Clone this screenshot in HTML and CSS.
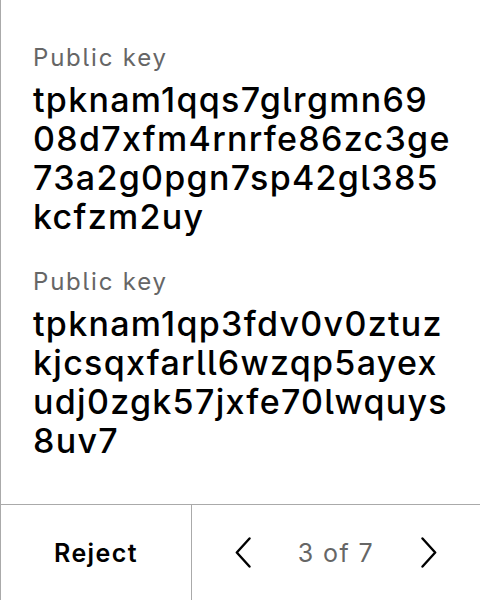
FILE: index.html
```html
<!DOCTYPE html>
<html lang="en">
<head>
<meta charset="utf-8">
<link rel="stylesheet" href="styles.css">
</head>
<body>
<div class="screen">
  <main class="content">
    <section class="field">
      <div class="label">Public key</div>
      <div class="value">tpknam1qqs7glrgmn69<br>08d7xfm4rnrfe86zc3ge<br>73a2g0pgn7sp42gl385<br>kcfzm2uy</div>
    </section>
    <section class="field">
      <div class="label">Public key</div>
      <div class="value">tpknam1qp3fdv0v0ztuz<br>kjcsqxfarll6wzqp5ayex<br>udj0zgk57jxfe70lwquys<br>8uv7</div>
    </section>
  </main>
  <footer class="footer">
    <button class="reject">Reject</button>
    <div class="pager">
      <svg class="chev" width="16" height="31" viewBox="0 0 16 31"><path d="M14.5 1.5 L1.8 15.5 L14.5 29.5" fill="none" stroke="#000" stroke-width="2.4" stroke-linecap="round" stroke-linejoin="round"/></svg>
      <span class="count">3 of 7</span>
      <svg class="chev" width="16" height="31" viewBox="0 0 16 31"><path d="M1.5 1.5 L14.2 15.5 L1.5 29.5" fill="none" stroke="#000" stroke-width="2.4" stroke-linecap="round" stroke-linejoin="round"/></svg>
    </div>
  </footer>
</div>
</body>
</html>
```
FILE: styles.css
```css
* { box-sizing: border-box; }
html, body { margin: 0; padding: 0; background: #fff; }
body { font-family: Inter, "Noto Sans", sans-serif; color: #000; font-feature-settings: "cv05" 1; }
.screen {
  width: 480px;
  height: 600px;
  border-left: 1px solid #aaa;
  display: flex;
  flex-direction: column;
}
.content {
  flex: 1;
  padding: 42px 0 0 32px;
  display: flex;
  flex-direction: column;
  gap: 30px;
}
.label {
  font-size: 24px;
  line-height: 32px;
  letter-spacing: 1.8px;
  color: #666;
}
.value {
  font-size: 34px;
  line-height: 39px;
  font-weight: 500;
  letter-spacing: 1.3px;
  margin-top: 6px;
}
.footer {
  height: 96px;
  border-top: 1px solid #aaa;
  display: flex;
}
.reject {
  width: 191px;
  border: 0;
  border-right: 1px solid #aaa;
  background: #fff;
  font-family: inherit;
  font-feature-settings: "cv05" 1;
  font-size: 25px;
  font-weight: 600;
  letter-spacing: 1.4px;
  color: #000;
  padding: 0;
}
.pager {
  flex: 1;
  display: flex;
  align-items: center;
  justify-content: center;
  gap: 47px;
}
.count {
  font-size: 25px;
  letter-spacing: 1.4px;
  color: #666;
}
```
